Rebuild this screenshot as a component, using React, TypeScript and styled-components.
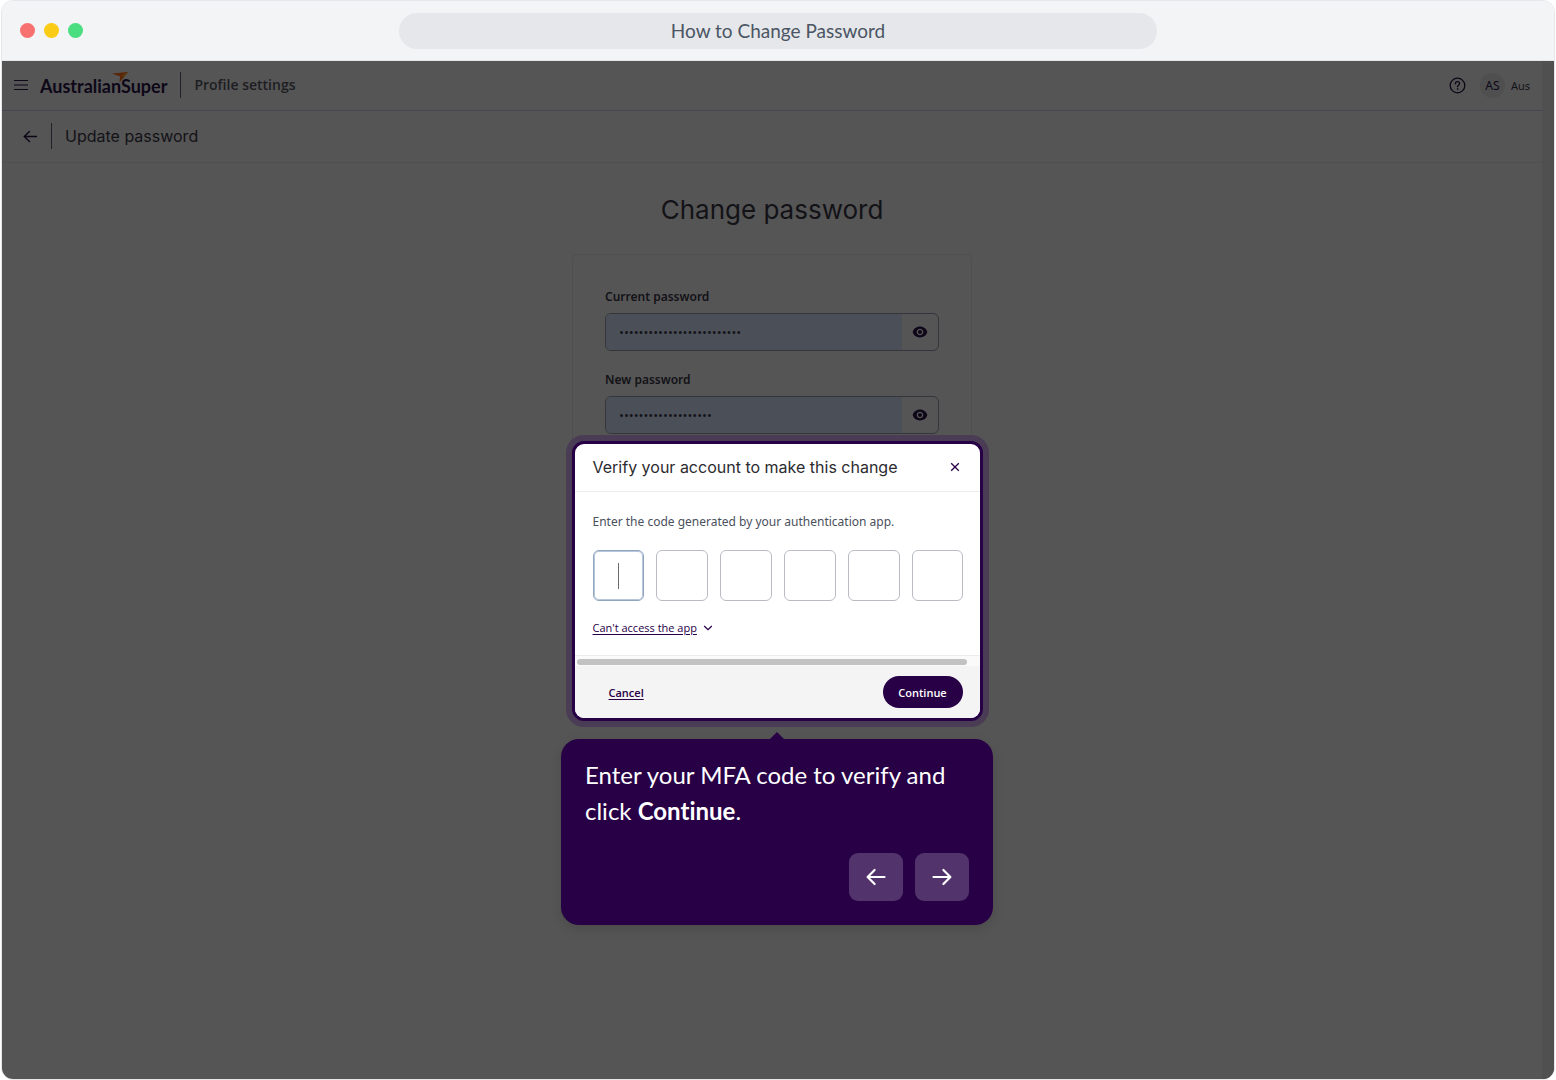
import React from "react";
import styled, { createGlobalStyle } from "styled-components";

const GlobalStyle = createGlobalStyle`
  *, *::before, *::after { box-sizing: border-box; }
  body {
    margin: 0;
    background: #ffffff;
    font-family: "Open Sans", "Noto Sans", sans-serif;
  }
  button, input { font: inherit; }
  button { cursor: pointer; border: 0; padding: 0; background: none; color: inherit; }
  h1, h2, p { margin: 0; font-weight: 400; }
`;

const display = `"Inter", "Open Sans", sans-serif`;
const rounded = `"Lato", "Open Sans", sans-serif`;
const humanist = `"Noto Sans", "Open Sans", sans-serif`;

const Page = styled.div`
  display: flex;
  min-height: 100vh;
  padding: 0 1px;
`;

const BrowserFrame = styled.div`
  flex: 1;
  display: flex;
  flex-direction: column;
  min-width: 0;
  overflow: hidden;
  border: 1px solid #e5e7eb;
  border-radius: 12px;
`;

const TitleBar = styled.header`
  display: grid;
  grid-template-columns: 1fr 2fr 1fr;
  align-items: center;
  height: 60px;
  padding: 0 18px;
  background: #f3f4f6;
  border-bottom: 1px solid #e5e7eb;
`;

const WindowDots = styled.div`
  display: flex;
  gap: 9px;
`;

const Dot = styled.span<{ $color: string }>`
  width: 15px;
  height: 15px;
  border-radius: 50%;
  background: ${(p) => p.$color};
`;

const AddressPill = styled.div`
  display: flex;
  align-items: center;
  justify-content: center;
  height: 36px;
  border-radius: 18px;
  background: #e5e7eb;
  color: #4b5563;
  font-family: ${rounded};
  font-size: 19px;
  line-height: 24px;
`;

const Screen = styled.div`
  position: relative;
  flex: 1;
  display: flex;
  background: #555555;
  color: #131217;
`;

const AppColumn = styled.div`
  flex: 1;
  min-width: 0;
`;

const ScrollGutter = styled.div`
  width: 12px;
  background: #505050;
`;

const AppHeader = styled.div`
  display: flex;
  align-items: center;
  height: 50px;
  padding: 0 12px 1px;
  border-bottom: 1px solid #484750;
`;

const SubHeader = styled.div`
  display: flex;
  align-items: center;
  height: 52px;
  padding: 0 21px 2px;
  border-bottom: 1px solid #4f4f50;
`;

const Divider = styled.span`
  width: 1px;
  height: 26px;
  margin: 0 13px;
  background: #222028;
`;

const IconButton = styled.button`
  display: grid;
  place-items: center;
  flex: none;
  color: #0d0718;

  svg { display: block; }
`;

const Logo = styled.a`
  position: relative;
  margin-left: 12px;
  padding-top: 2px;
  color: #0d0718;
  font-family: ${rounded};
  font-size: 18px;
  font-weight: 700;
  line-height: 24px;
  text-decoration: none;
`;

const LogoBird = styled.svg`
  position: absolute;
  top: 0;
  left: 72px;
`;

const SectionName = styled.span`
  flex: 1;
  color: #1d1d22;
  font-size: 14px;
  font-weight: 600;
  line-height: 20px;
`;

const Avatar = styled.span`
  display: grid;
  place-items: center;
  width: 25px;
  height: 25px;
  margin: 0 6px 0 14px;
  border-radius: 50%;
  background: #4f4f50;
  color: #0d0718;
  font-family: ${humanist};
  font-size: 12px;
`;

const UserName = styled.span`
  color: #131217;
  font-family: ${humanist};
  font-size: 11px;
`;

const SubTitle = styled.h2`
  font-family: ${display};
  font-size: 16px;
  line-height: 24px;
`;

const Main = styled.main`
  display: flex;
  flex-direction: column;
  align-items: center;
  padding-top: 31px;
`;

const PageTitle = styled.h1`
  font-family: ${display};
  font-size: 26px;
  line-height: 32px;
`;

const Card = styled.form`
  display: flex;
  flex-direction: column;
  gap: 19px;
  width: 400px;
  height: 400px;
  margin-top: 28px;
  padding: 32px;
  border: 1px solid #4f4f50;
  border-radius: 5px;
`;

const Field = styled.div`
  display: flex;
  flex-direction: column;
  gap: 6px;
`;

const FieldLabel = styled.label`
  font-family: ${humanist};
  font-size: 12px;
  font-weight: 600;
  line-height: 20px;
`;

const PasswordBox = styled.div`
  display: flex;
  height: 38px;
  overflow: hidden;
  border: 1px solid #34363b;
  border-radius: 6px;

  ${IconButton} { width: 36px; }
`;

const PasswordInput = styled.input`
  flex: 1;
  min-width: 0;
  padding: 0 13px;
  border: 0;
  outline: 0;
  background: #4b4f57;
  color: #131217;
  font-size: 13px;
`;

const TourLayer = styled.div`
  position: absolute;
  inset: 0;
  display: flex;
  flex-direction: column;
  align-items: center;
  gap: 18px;
  padding: 380px 2px 0 0;
`;

const Dialog = styled.section`
  width: 411px;
  overflow: hidden;
  border: 3px solid #270046;
  border-radius: 12px;
  box-shadow: 0 0 0 6px #493c54;
  background: #ffffff;
  color: #2b2b30;
`;

const DialogHeader = styled.div`
  display: flex;
  align-items: center;
  justify-content: space-between;
  height: 48px;
  padding: 0 16px 2px 18px;
  border-bottom: 1px solid #ececee;

  ${IconButton} {
    width: 18px;
    height: 18px;
    color: #270046;
  }
`;

const DialogTitle = styled.h2`
  font-family: ${display};
  font-size: 16px;
  line-height: 24px;
`;

const DialogBody = styled.div`
  display: flex;
  flex-direction: column;
  padding: 21px 16px 18px 18px;
`;

const Hint = styled.p`
  color: #4a505c;
  font-family: ${humanist};
  font-size: 12px;
  line-height: 18px;
`;

const CodeRow = styled.div`
  display: grid;
  grid-template-columns: repeat(6, 1fr);
  gap: 12px;
  margin: 19px 0 18px;
`;

const CodeInput = styled.input<{ $active: boolean }>`
  width: 100%;
  height: 51px;
  padding: 0;
  border: 1px solid ${(p) => (p.$active ? "#8fa5c0" : "#b9bdc3")};
  border-radius: 6px;
  outline: 0;
  text-align: center;
  box-shadow: ${(p) => (p.$active ? "inset 0 0 0 1px #b7c6d8" : "none")};
  background: ${(p) =>
    p.$active
      ? "linear-gradient(#6d6d72, #6d6d72) center / 1px 26px no-repeat #ffffff"
      : "#ffffff"};
`;

const HelpToggle = styled.button`
  display: flex;
  align-items: center;
  align-self: flex-start;
  gap: 6px;
  color: #270046;
  font-size: 11px;
  line-height: 18px;

  span { text-decoration: underline; text-underline-offset: 2px; }
`;

const ScrollTrack = styled.div`
  height: 11px;
  padding: 3px 13px 2px 2px;
  border-top: 1px solid #ececec;
  background: #fafafa;
`;

const ScrollThumb = styled.div`
  height: 6px;
  border-radius: 3px;
  background: #c2c2c2;
`;

const DialogFooter = styled.div`
  display: flex;
  align-items: center;
  justify-content: space-between;
  height: 52px;
  padding: 0 17px 0 34px;
  background: #f4f4f4;
  font-size: 11px;
  font-weight: 600;
`;

const CancelButton = styled.button`
  color: #270046;
  text-decoration: underline;
  text-underline-offset: 2px;
`;

const ContinueButton = styled.button`
  width: 80px;
  height: 32px;
  border-radius: 16px;
  background: #270046;
  color: #ffffff;
`;

const Tooltip = styled.aside`
  position: relative;
  width: 432px;
  padding: 18px 24px 24px;
  border-radius: 18px;
  background: #270046;
  box-shadow: 0 4px 12px rgba(0, 0, 0, 0.12);
  color: #ffffff;

  &::before {
    content: "";
    position: absolute;
    top: -7px;
    left: 50%;
    margin-left: -7px;
    border: 7px solid transparent;
    border-top: 0;
    border-bottom-color: #270046;
  }
`;

const TooltipText = styled.p`
  font-family: ${rounded};
  font-size: 24px;
  line-height: 36px;
  font-variant-ligatures: none;

  strong { font-weight: 700; }
`;

const StepButtons = styled.div`
  display: flex;
  justify-content: flex-end;
  gap: 12px;
  margin-top: 24px;
`;

const StepButton = styled.button`
  display: grid;
  place-items: center;
  width: 54px;
  height: 48px;
  border-radius: 9px;
  background: #52336b;
`;

const MenuIcon = () => (
  <svg width="14" height="12" viewBox="0 0 14 12" fill="none" stroke="currentColor" strokeWidth="1.2">
    <path d="M0 1.5h14M0 6h14M0 10.5h14" />
  </svg>
);

const BackIcon = () => (
  <svg width="15" height="14" viewBox="0 0 15 14" fill="none" stroke="currentColor" strokeWidth="1.4" strokeLinecap="round" strokeLinejoin="round">
    <path d="M13.5 7.5H1.5M6.5 2.5 1.2 7.5 6.5 12.5" />
  </svg>
);

const HelpIcon = () => (
  <svg width="17" height="17" viewBox="0 0 17 17" fill="none" stroke="currentColor" strokeWidth="1.3" strokeLinecap="round">
    <circle cx="8.5" cy="8.5" r="7.3" />
    <path d="M6.4 6.8c0-1.3.9-2.1 2.1-2.1s2.1.8 2.1 1.9c0 1.5-2.1 1.6-2.1 3.2" />
    <circle cx="8.5" cy="12" r=".4" fill="currentColor" strokeWidth=".7" />
  </svg>
);

const EyeIcon = () => (
  <svg width="16" height="16" viewBox="0 0 24 24" fill="currentColor">
    <path d="M12 3.8C6.600 3.800 2.500 7.200 1 12c1.500 4.800 5.600 8.200 11 8.200s9.500-3.400 11-8.200c-1.500-4.800-5.600-8.200-11-8.200zM12 17c-2.760 0-5-2.240-5-5s2.240-5 5-5 5 2.240 5 5-2.240 5-5 5zm0-8c-1.660 0-3 1.340-3 3s1.340 3 3 3 3-1.340 3-3-1.340-3-3-3z" />
  </svg>
);

const CloseIcon = () => (
  <svg width="10" height="10" viewBox="0 0 10 10" fill="none" stroke="currentColor" strokeWidth="1.3">
    <path d="M1.2 1.2l7.6 7.6M8.8 1.2L1.2 8.8" />
  </svg>
);

const ChevronIcon = () => (
  <svg width="10" height="6" viewBox="0 0 10 6" fill="none" stroke="currentColor" strokeWidth="1.3">
    <path d="M1.2 1l3.8 3.6L8.8 1" />
  </svg>
);

const StepArrow = ({ back }: { back?: boolean }) => (
  <svg width="20" height="18" viewBox="0 0 20 18" fill="none" stroke="currentColor" strokeWidth="2.2" strokeLinecap="round" strokeLinejoin="round">
    {back ? (
      <path d="M18.5 9H2M8.6 2 1.6 9l7 7" />
    ) : (
      <path d="M1.5 9H18M11.4 2l7 7-7 7" />
    )}
  </svg>
);

const fields = [
  { id: "current-password", label: "Current password", value: "a".repeat(25) },
  { id: "new-password", label: "New password", value: "a".repeat(19) },
];

export default function App() {
  return (
    <Page>
      <GlobalStyle />
      <BrowserFrame>
        <TitleBar>
          <WindowDots>
            <Dot $color="#f87171" />
            <Dot $color="#facc15" />
            <Dot $color="#4ade80" />
          </WindowDots>
          <AddressPill>How to Change Password</AddressPill>
        </TitleBar>

        <Screen>
          <AppColumn>
            <AppHeader>
              <IconButton type="button" aria-label="Menu">
                <MenuIcon />
              </IconButton>
              <Logo href="#home">
                AustralianSuper
                <LogoBird width="16" height="11" viewBox="0 0 16 11" aria-hidden="true">
                  <path d="M0 1.6 16 0 12.5 4.2 7.4 10.6 8.2 4.6z" fill="#5a2608" />
                  <path d="M16 0 12.5 4.2 8.2 4.6z" fill="#5b3b08" />
                </LogoBird>
              </Logo>
              <Divider />
              <SectionName>Profile settings</SectionName>
              <IconButton type="button" aria-label="Help">
                <HelpIcon />
              </IconButton>
              <Avatar>AS</Avatar>
              <UserName>Aus</UserName>
            </AppHeader>

            <SubHeader>
              <IconButton type="button" aria-label="Back">
                <BackIcon />
              </IconButton>
              <Divider />
              <SubTitle>Update password</SubTitle>
            </SubHeader>

            <Main>
              <PageTitle>Change password</PageTitle>
              <Card>
                {fields.map((f) => (
                  <Field key={f.id}>
                    <FieldLabel htmlFor={f.id}>{f.label}</FieldLabel>
                    <PasswordBox>
                      <PasswordInput id={f.id} type="password" autoComplete="off" defaultValue={f.value} />
                      <IconButton type="button" aria-label={`Show ${f.label.toLowerCase()}`}>
                        <EyeIcon />
                      </IconButton>
                    </PasswordBox>
                  </Field>
                ))}
              </Card>
            </Main>
          </AppColumn>
          <ScrollGutter />

          <TourLayer>
            <Dialog role="dialog" aria-labelledby="verify-title">
              <DialogHeader>
                <DialogTitle id="verify-title">Verify your account to make this change</DialogTitle>
                <IconButton type="button" aria-label="Close">
                  <CloseIcon />
                </IconButton>
              </DialogHeader>
              <DialogBody>
                <Hint>Enter the code generated by your authentication app.</Hint>
                <CodeRow>
                  {[1, 2, 3, 4, 5, 6].map((n) => (
                    <CodeInput key={n} $active={n === 1} aria-label={`Digit ${n}`} maxLength={1} inputMode="numeric" />
                  ))}
                </CodeRow>
                <HelpToggle type="button">
                  <span>Can't access the app</span>
                  <ChevronIcon />
                </HelpToggle>
              </DialogBody>
              <ScrollTrack>
                <ScrollThumb />
              </ScrollTrack>
              <DialogFooter>
                <CancelButton type="button">Cancel</CancelButton>
                <ContinueButton type="button">Continue</ContinueButton>
              </DialogFooter>
            </Dialog>

            <Tooltip>
              <TooltipText>
                Enter your MFA code to verify and click <strong>Continue</strong>.
              </TooltipText>
              <StepButtons>
                <StepButton type="button" aria-label="Previous step">
                  <StepArrow back />
                </StepButton>
                <StepButton type="button" aria-label="Next step">
                  <StepArrow />
                </StepButton>
              </StepButtons>
            </Tooltip>
          </TourLayer>
        </Screen>
      </BrowserFrame>
    </Page>
  );
}
